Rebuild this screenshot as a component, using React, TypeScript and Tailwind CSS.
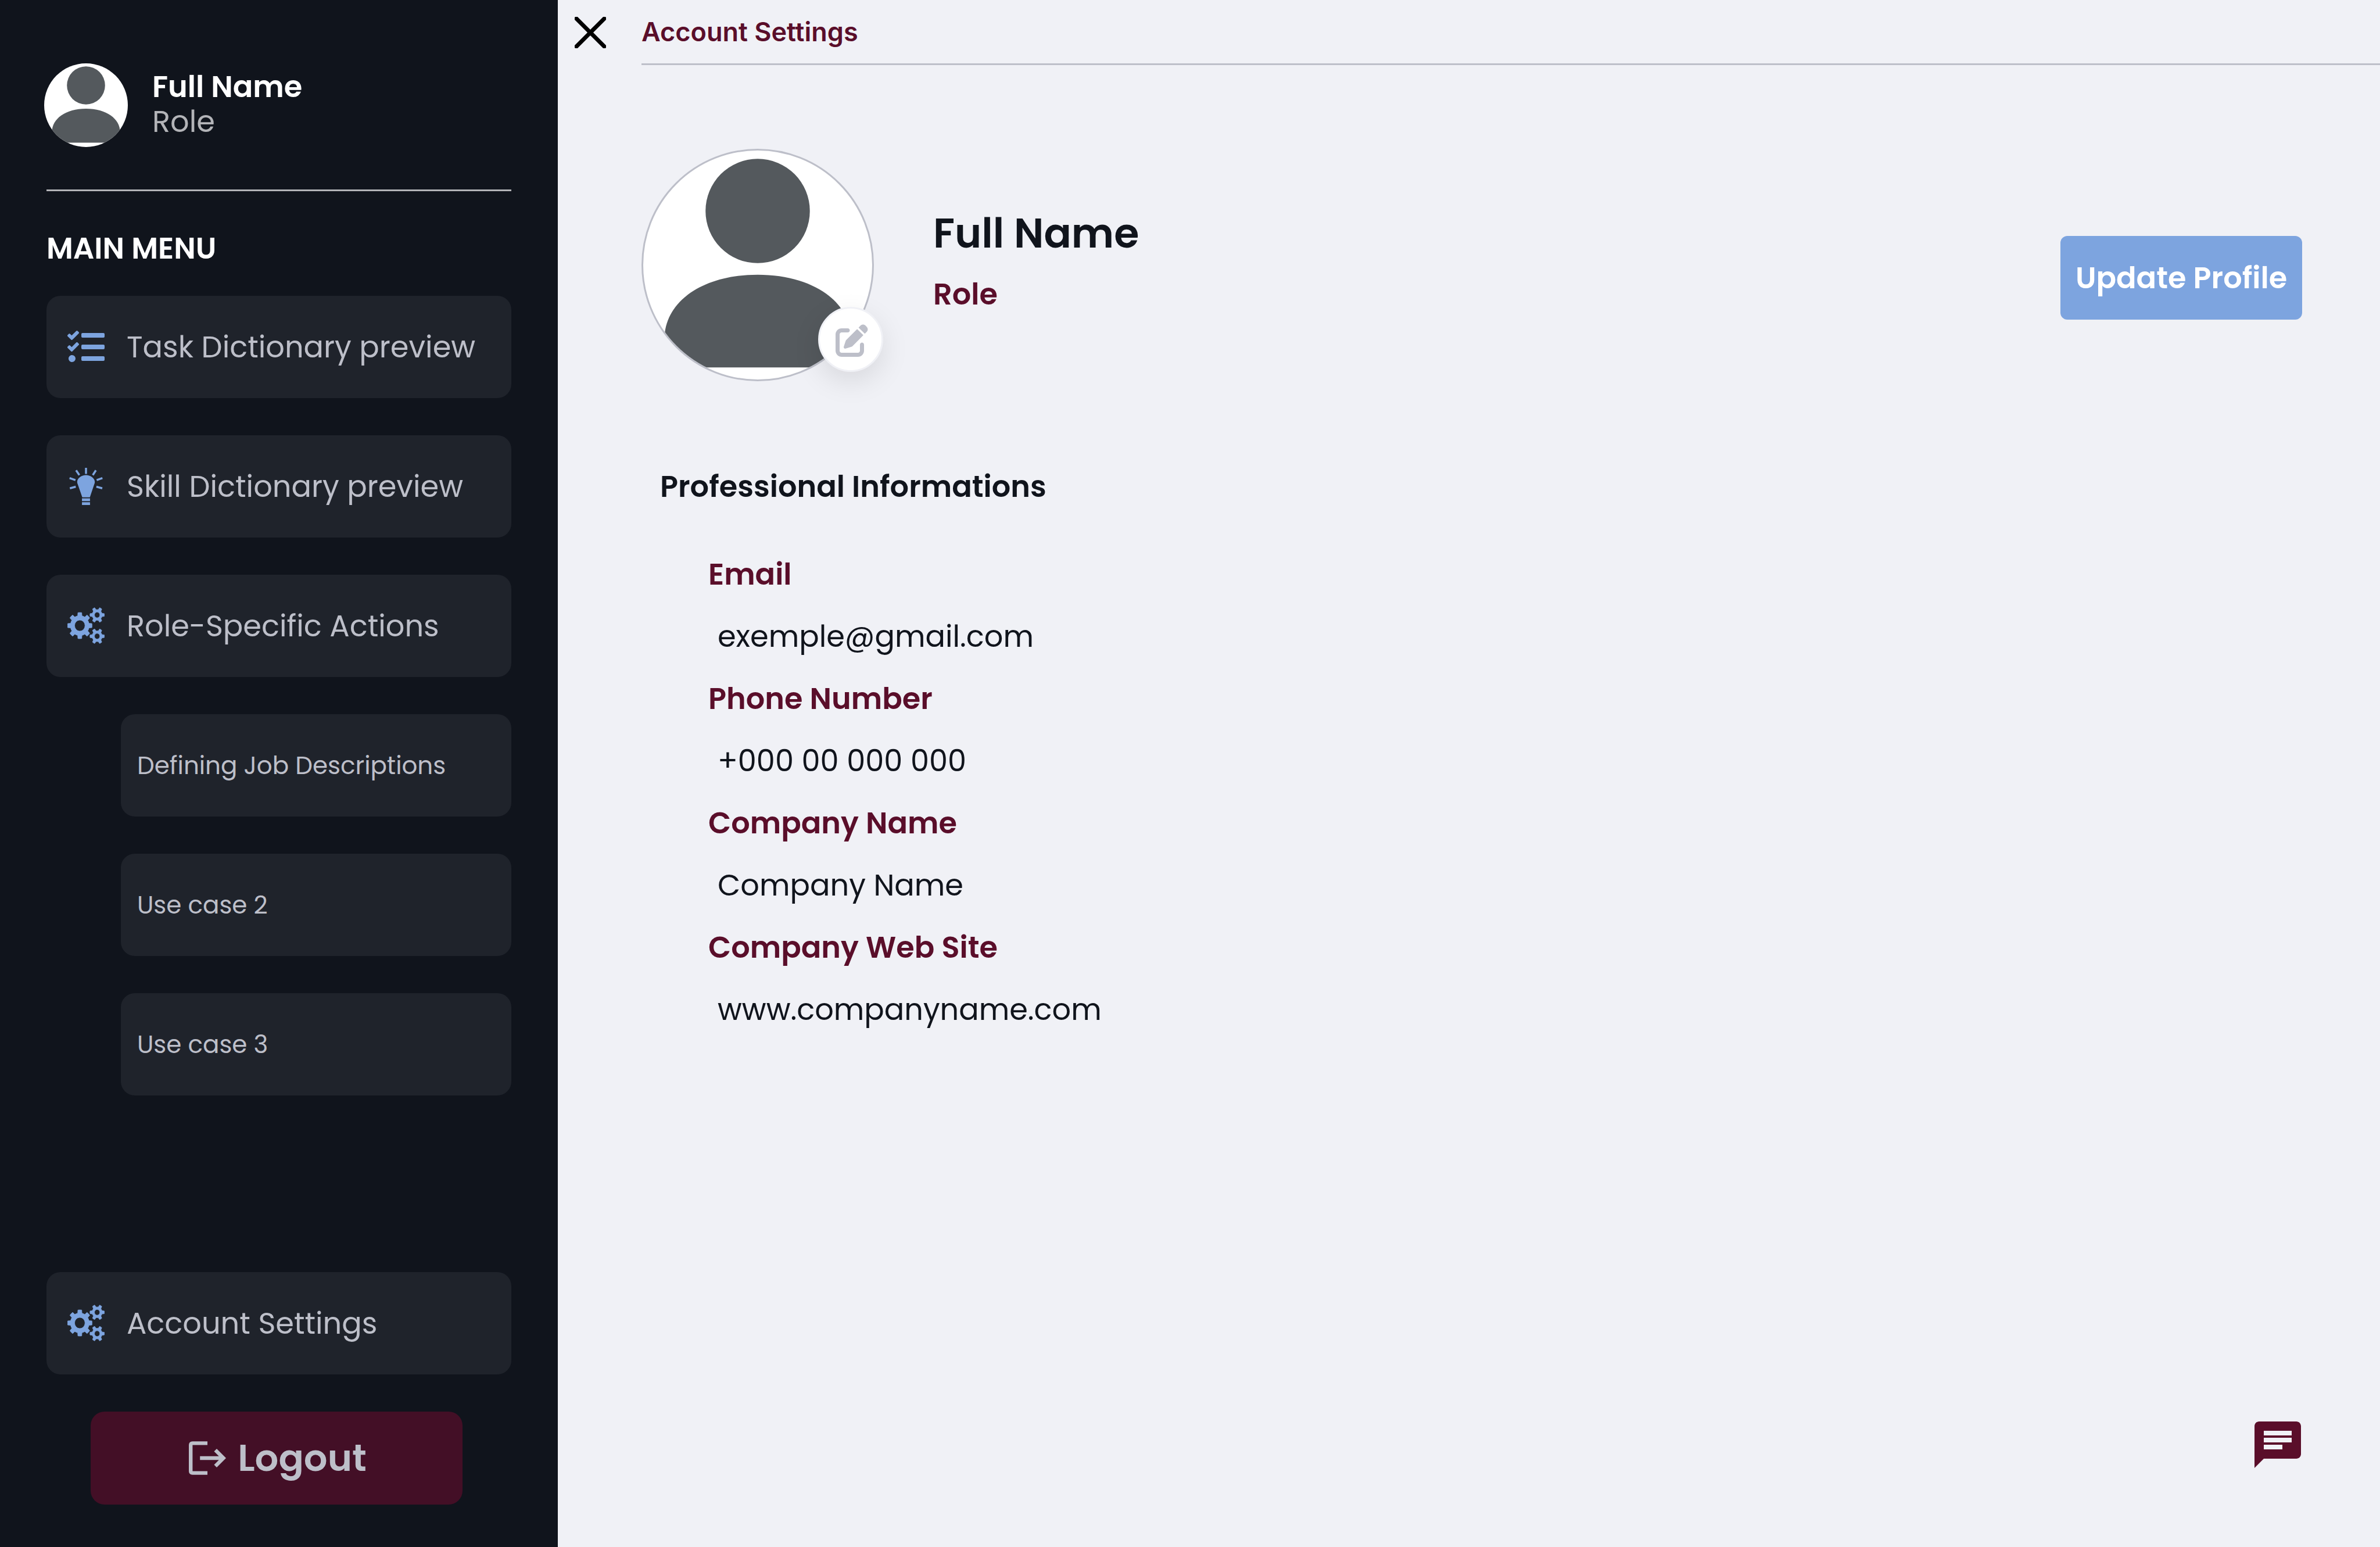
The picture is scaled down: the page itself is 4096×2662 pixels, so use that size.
import { FaTasks } from "react-icons/fa";
import { FaPenToSquare } from "react-icons/fa6";
import { MdChat } from "react-icons/md";

type IconProps = { className?: string };

function Avatar({ className }: IconProps) {
  return (
    <div className={`overflow-hidden rounded-full bg-white ${className ?? ""}`}>
      <svg viewBox="2 2 496 496" className="size-full" fill="#54595d" aria-hidden="true">
        <circle cx="250" cy="133" r="113" />
        <path d="M48 410C48 330 130 271 250 271S452 330 452 410V472H48Z" />
      </svg>
    </div>
  );
}

// Outline of a toothed wheel with a round hub hole (fill with evenodd).
function gearPath(
  cx: number,
  cy: number,
  teeth: number,
  outer: number,
  root: number,
  hole: number,
  tipHalf: number,
  rootHalf: number,
) {
  const at = (r: number, deg: number) => {
    const a = (deg * Math.PI) / 180;
    return `${(cx + r * Math.cos(a)).toFixed(2)} ${(cy + r * Math.sin(a)).toFixed(2)}`;
  };
  let d = "";
  for (let i = 0; i < teeth; i++) {
    const c = (360 / teeth) * i;
    d += i === 0 ? `M${at(root, c - rootHalf)}` : `A${root} ${root} 0 0 1 ${at(root, c - rootHalf)}`;
    d += `L${at(outer, c - tipHalf)}A${outer} ${outer} 0 0 1 ${at(outer, c + tipHalf)}L${at(root, c + rootHalf)}`;
  }
  d += `A${root} ${root} 0 0 1 ${at(root, -rootHalf)}Z`;
  d += `M${cx - hole} ${cy}a${hole} ${hole} 0 1 0 ${hole * 2} 0a${hole} ${hole} 0 1 0 ${-hole * 2} 0Z`;
  return d;
}

function GearsIcon({ className }: IconProps) {
  return (
    <svg viewBox="0 0 80 80" className={className} fill="currentColor" fillRule="evenodd" aria-hidden="true">
      <g transform="scale(1 1.07)" stroke="currentColor" strokeWidth="1" strokeLinejoin="round">
        <path d={gearPath(26.7, 36.8, 8, 26.3, 20.2, 11.2, 9, 13)} />
        <path d={gearPath(64, 15.4, 6, 15.5, 10.8, 5.8, 10, 18)} />
        <path d={gearPath(64, 58.2, 6, 15.5, 10.8, 5.8, 10, 18)} />
      </g>
    </svg>
  );
}

function BulbIcon({ className }: IconProps) {
  return (
    <svg viewBox="42 54 240 240" className={className} fill="currentColor" aria-hidden="true">
      <path d="M162 101C190 101 219 120 219 146C219 151 217 156 215 161L187 244H138L109 161C107 156 105 151 105 146C105 120 134 101 162 101Z" />
      <rect x="136" y="251" width="52" height="18" />
      <rect x="136" y="276" width="52" height="18" />
      <path
        d="M162 54V93M98 70L119 101M226 70L206 101M56 120L94 133M268 120L231 133M58 186L96 176M267 186L229 176"
        fill="none"
        stroke="currentColor"
        strokeWidth="13"
      />
    </svg>
  );
}

function LogoutIcon({ className }: IconProps) {
  return (
    <svg viewBox="54 78 240 240" className={className} fill="currentColor" aria-hidden="true">
      <path d="M174 90V114H78V282H174V306H78Q54 304 54 282V114Q54 92 78 90Z" />
      <path d="M126 186H248L217 155L234 138L294 198L234 258L217 241L248 210H126Z" />
    </svg>
  );
}

function CloseIcon({ className }: IconProps) {
  return (
    <svg viewBox="0 0 54 54" className={className} fill="none" aria-hidden="true">
      <path d="M3 3L51 51M51 3L3 51" stroke="#000" strokeWidth="7" strokeLinecap="round" />
    </svg>
  );
}

const mainItems = [
  { label: "Task Dictionary preview", Icon: FaTasks },
  { label: "Skill Dictionary preview", Icon: BulbIcon },
  { label: "Role-Specific Actions", Icon: GearsIcon },
];

const subItems = ["Defining Job Descriptions", "Use case 2", "Use case 3"];

const details = [
  { label: "Email", value: "exemple@gmail.com" },
  { label: "Phone Number", value: "+000 00 000 000" },
  { label: "Company Name", value: "Company Name" },
  { label: "Company Web Site", value: "www.companyname.com" },
];

const itemBase = "flex h-44 items-center rounded-3xl bg-[#1f232b] text-left text-[#bdbfc9]";

export default function App() {
  return (
    <div className="flex min-h-screen bg-[#f0f1f6] font-['Poppins','Inter',sans-serif] text-[#10141c]">
      <aside className="flex w-[960px] shrink-0 flex-col bg-[#10141c] px-20 pt-[109px] pb-[73px]">
        <div className="-ml-1 flex items-center gap-[42px]">
          <Avatar className="size-36" />
          <div className="pb-1 text-[51px] leading-[60px]">
            <p className="font-semibold text-white">Full Name</p>
            <p className="text-[#b3b4b8]">Role</p>
          </div>
        </div>
        <hr className="mt-[73px] border-t-3 border-[#b3b4b8]" />
        <h2 className="mt-[66px] text-[51px] leading-[64px] font-semibold text-white">MAIN MENU</h2>
        <nav className="mt-[50px] flex flex-col gap-16">
          {mainItems.map(({ label, Icon }) => (
            <button key={label} type="button" className={`${itemBase} gap-[38px] px-9 text-[51px]`}>
              <Icon className="size-16 shrink-0 text-[#7da4df]" />
              {label}
            </button>
          ))}
          {subItems.map((label) => (
            <button key={label} type="button" className={`${itemBase} ml-32 px-7 text-[42px]`}>
              {label}
            </button>
          ))}
        </nav>
        <button type="button" className={`${itemBase} mt-auto gap-[38px] px-9 text-[51px]`}>
          <GearsIcon className="size-16 shrink-0 text-[#7da4df]" />
          Account Settings
        </button>
        <button
          type="button"
          className="mt-16 mr-21 ml-19 flex h-40 items-center justify-center gap-5 rounded-3xl bg-[#430f26] pl-1 text-[64px] font-semibold text-[#bdbfc9]"
        >
          <LogoutIcon className="size-16" />
          Logout
        </button>
      </aside>

      <main className="flex grow flex-col">
        <header className="flex h-28">
          <button type="button" aria-label="Close" className="flex w-36 items-center pl-[29px]">
            <CloseIcon className="size-[54px]" />
          </button>
          <h1 className="flex grow items-center border-b-3 border-[#bdbfc9] font-['Inter',sans-serif] text-[45px] font-semibold text-[#5a0e2a]">
            Account Settings
          </h1>
        </header>

        <section className="mt-36 mr-[134px] ml-36 flex items-center">
          <div className="relative">
            <Avatar className="size-100 border-3 border-[#bdbfc9]" />
            <button
              type="button"
              aria-label="Edit picture"
              className="absolute -right-4 bottom-4 flex size-28 items-center justify-center rounded-full border-3 border-[#f0f1f6] bg-white pt-1 pl-1 shadow-[0_16px_48px_rgba(0,0,0,0.1)]"
            >
              <FaPenToSquare className="size-14 text-[#bdbfc9]" />
            </button>
          </div>
          <div className="ml-[102px] pb-1 leading-[105px] font-semibold">
            <p className="text-[70px]">Full Name</p>
            <p className="text-[51px] text-[#5a0e2a]">Role</p>
          </div>
          <button
            type="button"
            className="mt-11 ml-auto h-36 w-[416px] rounded-xl bg-[#7da4df] text-[51px] font-semibold text-white"
          >
            Update Profile
          </button>
        </section>

        <section className="mt-[149px] ml-44 text-[51px]">
          <h2 className="leading-[64px] font-semibold">Professional Informations</h2>
          <dl className="mt-[66px] ml-[83px] leading-[107px]">
            {details.map(({ label, value }) => (
              <div key={label}>
                <dt className="font-semibold text-[#5a0e2a]">{label}</dt>
                <dd className="ml-4">{value}</dd>
              </div>
            ))}
          </dl>
        </section>

        <button type="button" aria-label="Open chat" className="mt-auto mr-32 mb-32 self-end">
          <MdChat className="size-24 text-[#5a0e2a]" />
        </button>
      </main>
    </div>
  );
}
